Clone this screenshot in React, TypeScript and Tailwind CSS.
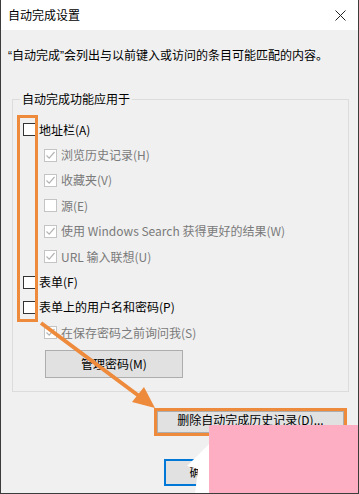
import React from "react";

const font = "font-['Noto_Sans_CJK_SC','Noto_Sans',sans-serif]";

const CheckBox = ({ checked, disabled }: { checked?: boolean; disabled?: boolean }) => (
  <span
    className={`flex h-[13px] w-[13px] shrink-0 items-center justify-center border bg-white ${
      disabled ? "border-[#c4c4c4]" : "border-[#333333]"
    }`}
  >
    {checked && (
      <svg width="11" height="11" viewBox="0 0 11 11">
        <polyline
          points="1.5,5.5 4.2,8.2 9.5,2"
          fill="none"
          stroke={disabled ? "#b4b4b4" : "#333"}
          strokeWidth="1.2"
        />
      </svg>
    )}
  </span>
);

const Row = ({
  label,
  sub,
  checked,
}: {
  label: React.ReactNode;
  sub?: boolean;
  checked?: boolean;
}) => (
  <div className={`flex h-[25.4px] items-center ${sub ? "pl-[31px]" : "pl-[10px]"}`}>
    <CheckBox checked={checked} disabled={sub} />
    <span className={`ml-[3px] whitespace-nowrap text-[12px] leading-[16px] ${sub ? "ml-[4px] text-[#7a7a7a]" : "text-black"}`}>
      {label}
    </span>
  </div>
);

const App = () => {
  return (
    <div className={`relative flex h-[494px] w-[359px] flex-col overflow-hidden border-x border-b border-[#3c3c3c] bg-[#f0f0f0] ${font}`}>
      {/* Title bar */}
      <div className="flex h-[30px] shrink-0 items-center justify-between bg-white pl-[7px] pr-[7px]">
        <span className="text-[12px] leading-[16px] text-black">自动完成设置</span>
        <svg width="11" height="11" viewBox="0 0 11 11" className="mr-[5px]">
          <path d="M0.5 0.5 L10.5 10.5 M10.5 0.5 L0.5 10.5" stroke="#222" strokeWidth="1" />
        </svg>
      </div>

      {/* Body */}
      <div className="flex flex-1 flex-col">
        <p className="whitespace-nowrap pl-[7px] pt-[17px] text-[12px] leading-[16px] text-black">
          <span className="font-['Liberation_Sans']">“</span>自动完成<span className="font-['Liberation_Sans']">”</span>
          会列出与以前键入或访问的条目可能匹配的内容。
        </p>

        <fieldset className="ml-[11px] mt-[27px] w-[337px] border border-[#dcdcdc] px-0 pb-[13px] pt-0">
          <legend className="ml-[7px] px-[2px] text-[12px] leading-[16px] text-black">自动完成功能应用于</legend>
          <div className="pt-[10px]">
            <Row label="地址栏(A)" />
            <Row sub checked label="浏览历史记录(H)" />
            <Row sub checked label="收藏夹(V)" />
            <Row sub label="源(E)" />
            <Row sub checked label="使用 Windows Search 获得更好的结果(W)" />
            <Row sub checked label="URL 输入联想(U)" />
            <Row label="表单(F)" />
            <Row label="表单上的用户名和密码(P)" />
            <Row sub checked label="在保存密码之前询问我(S)" />
          </div>
          <div className="ml-[32px] mt-[4px] flex h-[28px] w-[138px] items-center justify-center border border-[#adadad] bg-[#e1e1e1] text-[12px] text-black">
            管理密码(M)
          </div>
        </fieldset>

        <div className="mt-[16px] flex justify-end pr-[11px]">
          <div className="h-[28px] w-[193px] border-[3px] border-[#ee8a3b] bg-[#e1e1e1]">
            <div className="flex h-full items-center justify-center whitespace-nowrap border border-[#adadad] pb-[4px] text-[12px] leading-[14px] text-black">
              删除自动完成历史记录(D)...
            </div>
          </div>
        </div>

        <div className="mt-[23px] flex pl-[163px]">
          <div className="flex h-[27px] w-[75px] items-center justify-center border-2 border-[#0078d7] bg-[#e1e1e1] text-[12px] text-black">
            确定
          </div>
        </div>
      </div>

      {/* Annotation: orange box round the checkboxes */}
      <div className="absolute left-[16px] top-[115px] h-[207px] w-[21px] border-[3px] border-[#ee8a3b]" />

      {/* Annotation: arrow */}
      <svg className="absolute left-0 top-0" width="359" height="494" viewBox="0 0 359 494">
        <line x1="40" y1="323" x2="138" y2="396" stroke="#ee8a3b" strokeWidth="4" />
        <polygon points="154,408 131,402 143,387" fill="#ee8a3b" />
        <polygon points="208,444 196,456 186,466 197,469 194,494 208,494" fill="#ffffff" />
      </svg>

      {/* Watermark */}
      <div className="absolute left-[208px] top-[425px] h-[69px] w-[151px] bg-[#feaec2]" />
    </div>
  );
};

export default App;
